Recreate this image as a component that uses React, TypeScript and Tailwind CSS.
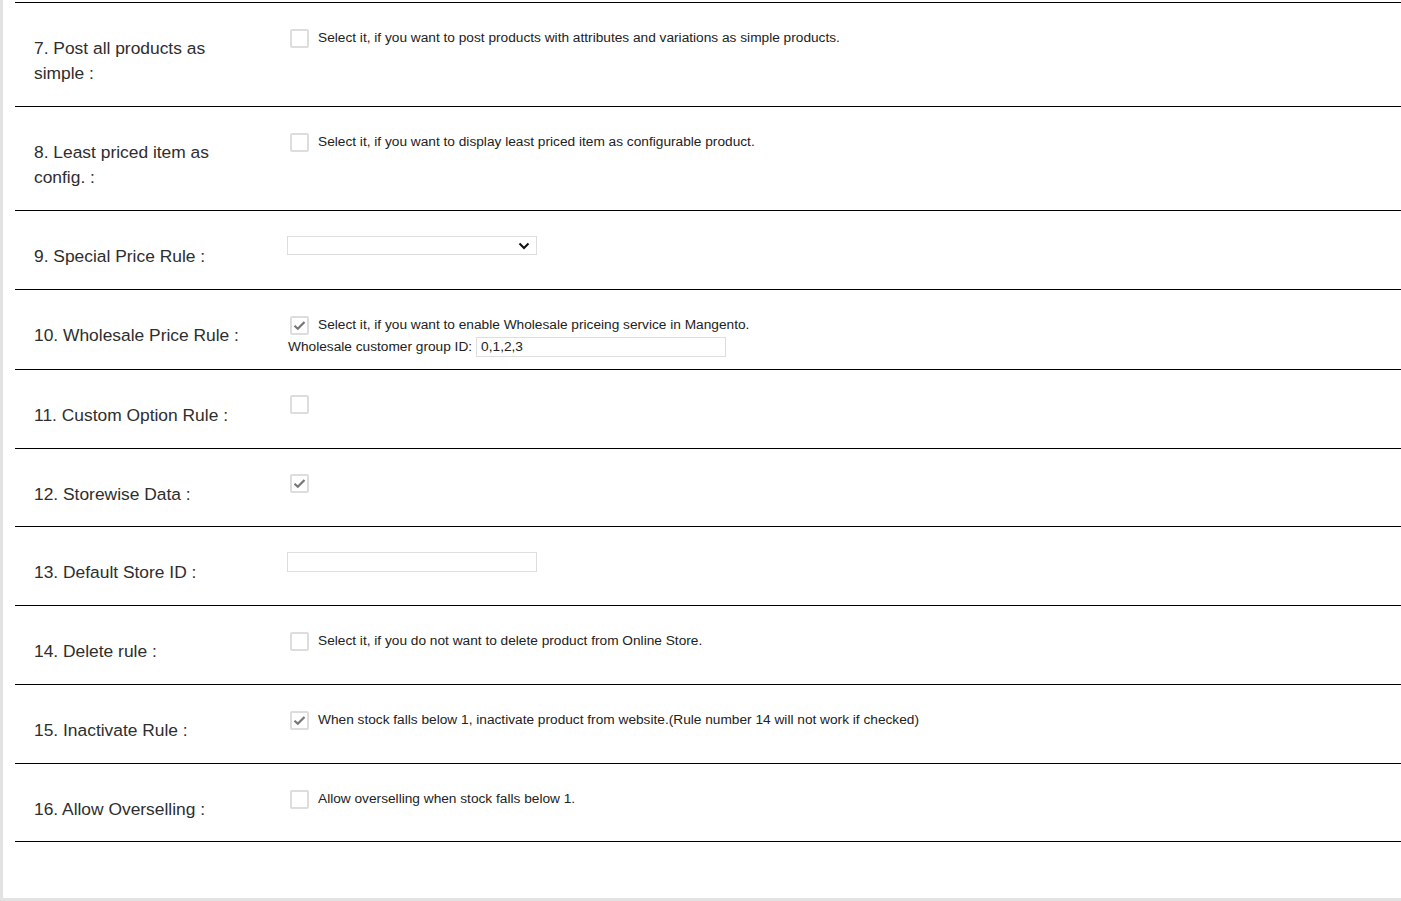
import React from 'react';

interface RuleRow {
  label: string;
  kind: 'check' | 'select' | 'input' | 'wholesale';
  checked?: boolean;
  text?: string;
  pb?: string;
}

const rows: RuleRow[] = [
  { label: '7. Post all products as simple :', kind: 'check', text: 'Select it, if you want to post products with attributes and variations as simple products.' },
  { label: '8. Least priced item as config. :', kind: 'check', text: 'Select it, if you want to display least priced item as configurable product.' },
  { label: '9. Special Price Rule :', kind: 'select' },
  { label: '10. Wholesale Price Rule :', kind: 'wholesale', checked: true, pb: 'pb-[21px]' },
  { label: '11. Custom Option Rule :', kind: 'check' },
  { label: '12. Storewise Data :', kind: 'check', checked: true, pb: 'pb-[19px]' },
  { label: '13. Default Store ID :', kind: 'input' },
  { label: '14. Delete rule :', kind: 'check', text: 'Select it, if you do not want to delete product from Online Store.' },
  { label: '15. Inactivate Rule :', kind: 'check', checked: true, text: 'When stock falls below 1, inactivate product from website.(Rule number 14 will not work if checked)' },
  { label: '16. Allow Overselling :', kind: 'check', text: 'Allow overselling when stock falls below 1.', pb: 'pb-[19px]' },
];

const Checkbox: React.FC<{ checked?: boolean }> = ({ checked }) => (
  <span className="flex h-[19px] w-[19px] shrink-0 items-center justify-center rounded-[2px] border-2 border-[#dddddd] bg-white">
    {checked && (
      <svg width="13" height="11" viewBox="0 0 13 11">
        <path d="M1.5 5.8 L4.8 8.8 L11.5 2" fill="none" stroke="#777" strokeWidth="2.2" />
      </svg>
    )}
  </span>
);

const Content: React.FC<{ row: RuleRow }> = ({ row }) => {
  if (row.kind === 'select') {
    return (
      <div className="flex h-[19px] w-[250px] items-center justify-end border border-[#dedede] bg-white pr-[6px]">
        <svg width="12" height="8" viewBox="0 0 12 8">
          <path d="M1.5 1.5 L6 6 L10.5 1.5" fill="none" stroke="#111" strokeWidth="2" />
        </svg>
      </div>
    );
  }
  if (row.kind === 'input') {
    return <div className="h-[20px] w-[250px] border border-[#dedede] bg-white" />;
  }
  if (row.kind === 'wholesale') {
    return (
      <div className="flex flex-col">
        <div className="flex items-center gap-[9px] pl-[3px]">
          <Checkbox checked />
          <span>Select it, if you want to enable Wholesale priceing service in Mangento.</span>
        </div>
        <div className="mt-[2px] flex items-center">
          <span className="pl-[1px]">Wholesale customer group ID:</span>
          <div className="ml-[4px] flex h-[20px] w-[250px] items-center border border-[#dedede] pl-[4px]">0,1,2,3</div>
        </div>
      </div>
    );
  }
  return (
    <div className="flex items-center gap-[9px] pl-[3px]">
      <Checkbox checked={row.checked} />
      {row.text && <span>{row.text}</span>}
    </div>
  );
};

export default function App() {
  return (
    <div
      className="box-border flex h-[901px] flex-col overflow-hidden border-b-[3px] border-l-[3px] border-[#e2e2e2] bg-white pt-[2px]"
      style={{ fontFamily: '"Liberation Sans", Arial, sans-serif' }}
    >
      <div className="ml-[12px] border-t border-black">
        {rows.map((row) => (
          <div key={row.label} className="flex border-b border-black">
            <div
              className={`w-[272px] shrink-0 pl-[19px] pr-[40px] pt-[33px] text-[17.4px] leading-[25px] text-[#2e2e2e] ${row.pb ?? 'pb-[20px]'}`}
            >
              {row.label}
            </div>
            <div className="pt-[25px] text-[13.7px] leading-[20px] text-[#222]">
              <Content row={row} />
            </div>
          </div>
        ))}
      </div>
    </div>
  );
}
